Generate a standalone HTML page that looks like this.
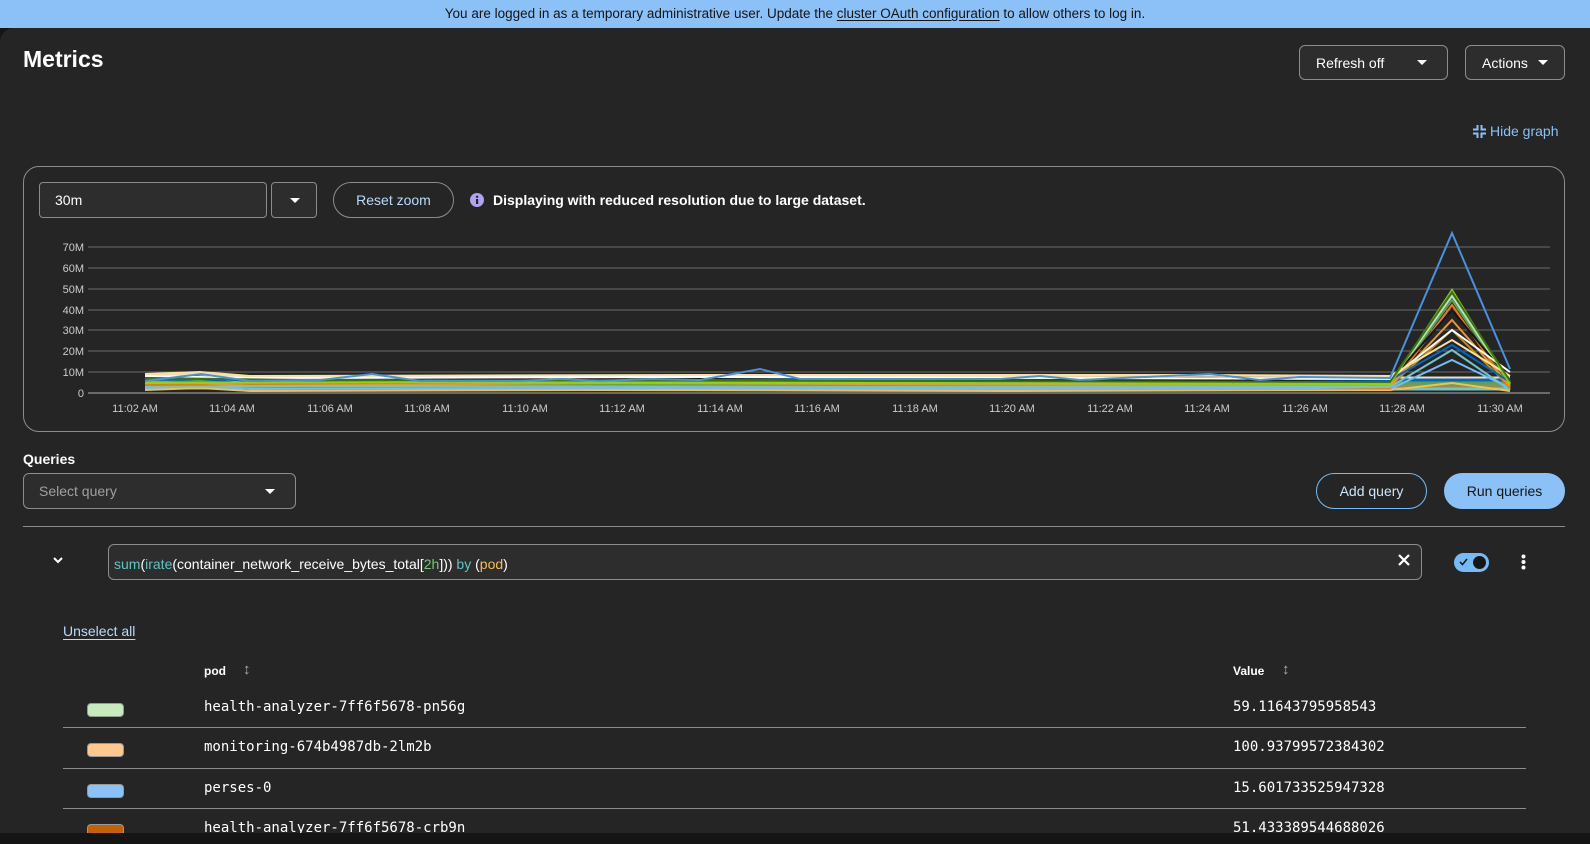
<!DOCTYPE html>
<html><head><meta charset="utf-8"><style>
*{box-sizing:border-box;margin:0;padding:0}
body{width:1590px;height:844px;background:#151515;font-family:"Liberation Sans",sans-serif;color:#fff;position:relative;overflow:hidden}
.banner{position:absolute;left:0;top:0;width:1590px;height:28px;background:#8bc1f7;color:#151515;font-size:13.5px;text-align:center;line-height:28px}
.banner u{text-underline-offset:2px}
.page{position:absolute;left:0;top:28px;width:1590px;height:805px;background:#252525;border-top-left-radius:14px}
.abs{position:absolute}
.btn{position:absolute;border:1px solid #8a8d90;border-radius:6px;background:#2d2d2d;font-size:14px;color:#fff;display:flex;align-items:center}
.caret{width:0;height:0;border-left:5px solid transparent;border-right:5px solid transparent;border-top:5px solid #fff;position:absolute}
.mono{font-family:"DejaVu Sans Mono","Liberation Mono",monospace;font-size:14px}
.row{position:absolute;left:63px;width:1463px;height:1px;background:#8a8d90}
.sw{position:absolute;left:87px;width:37px;height:14px;border-radius:4px;border:1px solid #999}
</style></head><body>
<div class="banner">You are logged in as a temporary administrative user. Update the <u>cluster OAuth configuration</u> to allow others to log in.</div>
<div class="page"></div>
<div class="abs" style="left:23px;top:46px;font-size:23px;font-weight:bold">Metrics</div>
<div class="btn" style="left:1299px;top:45px;width:149px;height:35px;padding-left:16px">Refresh off<span class="caret" style="right:20px;top:14px"></span></div>
<div class="btn" style="left:1465px;top:45px;width:100px;height:35px;padding-left:16px">Actions<span class="caret" style="right:16px;top:14px"></span></div>
<svg class="abs" style="left:1473px;top:125px" width="13" height="13" viewBox="0 0 13 13" fill="none" stroke="#8bc1f7" stroke-width="2"><path d="M4.5 0v4.5H0M8.5 0v4.5H13M4.5 13V8.5H0M8.5 13V8.5H13"/></svg>
<div class="abs" style="left:1490px;top:123px;font-size:14px;color:#8bc1f7">Hide graph</div>

<div class="abs" style="left:23px;top:166px;width:1542px;height:266px;border:1px solid #8a8d90;border-radius:16px"></div>
<div class="btn" style="left:39px;top:182px;width:228px;height:36px;padding-left:15px;border-radius:4px">30m</div>
<div class="btn" style="left:271px;top:182px;width:46px;height:36px;border-radius:4px"><span class="caret" style="left:18px;top:15px"></span></div>
<div class="btn" style="left:333px;top:182px;width:121px;height:36px;border-radius:18px;background:none;justify-content:center;color:#b9dafc">Reset zoom</div>
<svg class="abs" style="left:470px;top:193px" width="14" height="14"><circle cx="7" cy="7" r="7" fill="#b2a3f1"/><rect x="6" y="6" width="2.2" height="5" fill="#252525"/><circle cx="7.1" cy="3.8" r="1.2" fill="#252525"/></svg>
<div class="abs" style="left:493px;top:192px;font-size:14px;font-weight:bold">Displaying with reduced resolution due to large dataset.</div>

<svg class="abs" style="left:0;top:0" width="1590" height="440" font-family="Liberation Sans" font-size="11" fill="#ccc">
<g stroke="#6a6a6a" stroke-width="1">
<line x1="88" y1="247" x2="1550" y2="247"/><line x1="88" y1="268" x2="1550" y2="268"/><line x1="88" y1="289" x2="1550" y2="289"/><line x1="88" y1="310" x2="1550" y2="310"/><line x1="88" y1="330" x2="1550" y2="330"/><line x1="88" y1="351" x2="1550" y2="351"/><line x1="88" y1="372" x2="1550" y2="372"/><line x1="88" y1="393" x2="1550" y2="393" stroke-width="2"/>
</g>
<g text-anchor="end"><text x="84" y="251">70M</text><text x="84" y="272">60M</text><text x="84" y="293">50M</text><text x="84" y="314">40M</text><text x="84" y="334">30M</text><text x="84" y="355">20M</text><text x="84" y="376">10M</text><text x="84" y="397">0</text></g>
<g text-anchor="middle"><text x="135" y="412">11:02 AM</text><text x="232" y="412">11:04 AM</text><text x="330" y="412">11:06 AM</text><text x="427" y="412">11:08 AM</text><text x="525" y="412">11:10 AM</text><text x="622" y="412">11:12 AM</text><text x="720" y="412">11:14 AM</text><text x="817" y="412">11:16 AM</text><text x="915" y="412">11:18 AM</text><text x="1012" y="412">11:20 AM</text><text x="1110" y="412">11:22 AM</text><text x="1207" y="412">11:24 AM</text><text x="1305" y="412">11:26 AM</text><text x="1402" y="412">11:28 AM</text><text x="1500" y="412">11:30 AM</text></g>
<g fill="none" stroke-width="3">
<polyline stroke="#f9e0a2" points="145,375 200,374 250,378 700,377 1390,378 1510,378"/>
<polyline stroke="#5ba352" points="145,381 200,379 250,383 700,382 1200,381 1390,383 1510,383"/>
<polyline stroke="#8f8f5a" points="145,384 250,386 700,385 1390,386 1510,386"/>
<polyline stroke="#73c5c5" points="145,388 300,388 800,389 1390,389 1510,389"/>
<polyline stroke="#0066cc" points="145,379 250,380 700,379 1390,380 1510,380"/>
</g>
<g fill="none" stroke-width="2">
<polyline stroke="#f4c145" points="145,390 200,388 250,391 600,390 1000,391 1390,390 1452,383 1510,391"/>
<polyline stroke="#73bcf7" points="145,388 200,386 250,389 700,388 1100,389 1390,389 1452,360 1510,388"/>
<polyline stroke="#c58c00" points="145,386 200,385 250,387 800,386 1390,386 1452,330 1510,387"/>
<polyline stroke="#5ba352" points="145,384 200,381 250,385 700,384 1200,383 1390,385 1452,300 1510,385"/>
<polyline stroke="#ec7a08" points="145,385 250,384 700,383 1100,384 1390,388 1452,305 1510,389"/>
<polyline stroke="#ef9234" points="145,382 200,383 250,386 600,383 1390,386 1452,320 1510,386"/>
<polyline stroke="#bde2b9" points="145,379 200,377 250,382 700,381 1390,383 1452,296 1510,383"/>
<polyline stroke="#73c5c5" points="145,387 300,386 800,387 1390,387 1452,350 1510,390"/>
<polyline stroke="#151515" points="145,377 250,380 700,379 1390,381 1452,310 1510,380"/>
<polyline stroke="#0066cc" points="145,380 200,378 250,381 700,380 1200,378 1390,380 1452,345 1510,382"/>
<polyline stroke="#fff" points="145,376 250,378 700,377 1390,379 1452,330 1510,372"/>
<polyline stroke="#f9e0a2" points="145,374 200,372 250,376 700,375 1200,375 1390,376 1452,340 1510,376"/>
<polyline stroke="#92d400" points="145,383 400,382 900,383 1390,384 1452,290 1510,384"/>
<polyline stroke="#3d7317" points="145,378 300,380 900,381 1390,382 1452,292 1510,381"/>
<polyline stroke="#4a90e2" points="145,381 201,374 250,381 320,380 372,374 420,381 520,381 560,379 600,381 650,379 700,380 760,369 800,379 1000,379 1040,376 1080,380 1210,374 1260,380 1300,377 1390,378 1452,233 1510,369"/>
</g>
</svg>

<div class="abs" style="left:23px;top:451px;font-size:14px;font-weight:bold">Queries</div>
<div class="btn" style="left:23px;top:473px;width:273px;height:36px;padding-left:15px;color:#a0a0a0;border-radius:6px">Select query<span class="caret" style="right:20px;top:15px"></span></div>
<div class="btn" style="left:1316px;top:473px;width:111px;height:36px;border-radius:18px;background:none;border-color:#73bcf7;justify-content:center;color:#cde4fb">Add query</div>
<div class="btn" style="left:1444px;top:473px;width:121px;height:36px;border-radius:18px;background:#8bc1f7;border-color:#8bc1f7;justify-content:center;color:#151515">Run queries</div>
<div class="abs" style="left:23px;top:526px;width:1542px;height:1px;background:#8a8d90"></div>
<svg class="abs" style="left:53px;top:556px" width="10" height="8"><path d="M1 2l4 4 4-4" stroke="#fff" stroke-width="2" fill="none"/></svg>
<div class="btn" style="left:108px;top:544px;width:1314px;height:36px;padding-left:5px;padding-top:4px;border-radius:6px;font-size:14px"><span><span style="color:#5ec4c4">sum</span>(<span style="color:#5ec4c4">irate</span>(container_network_receive_bytes_total[<span style="color:#7cc674">2h</span>])) <span style="color:#5ec4c4">by</span> (<span style="color:#f4c145">pod</span>)</span></div>
<svg class="abs" style="left:1398px;top:554px" width="12" height="12"><path d="M1 1l10 10M11 1L1 11" stroke="#fff" stroke-width="2.2"/></svg>
<div class="abs" style="left:1454px;top:553px;width:35px;height:19px;border-radius:10px;background:#73bcf7"></div>
<div class="abs" style="left:1473px;top:556px;width:13px;height:13px;border-radius:50%;background:#151515"></div>
<svg class="abs" style="left:1459px;top:558px" width="9" height="8"><path d="M1 4l2.5 2.5L8 1" stroke="#151515" stroke-width="1.6" fill="none"/></svg>
<svg class="abs" style="left:1521px;top:554px" width="5" height="16"><circle cx="2.5" cy="2.5" r="2" fill="#fff"/><circle cx="2.5" cy="8" r="2" fill="#fff"/><circle cx="2.5" cy="13.5" r="2" fill="#fff"/></svg>

<div class="abs" style="left:63px;top:623px;font-size:14px;color:#b9dafc;text-decoration:underline;text-underline-offset:3px">Unselect all</div>
<div class="abs" style="left:204px;top:664px;font-size:12px;font-weight:bold">pod</div>
<div class="abs" style="left:243px;top:661px;font-size:15px;color:#aaa">↕</div>
<div class="abs" style="left:1233px;top:664px;font-size:12px;font-weight:bold">Value</div>
<div class="abs" style="left:1282px;top:661px;font-size:15px;color:#aaa">↕</div>

<div class="sw" style="top:703px;background:#c8ebbd"></div>
<div class="abs mono" style="left:204px;top:699px">health-analyzer-7ff6f5678-pn56g</div>
<div class="abs mono" style="left:1233px;top:699px">59.11643795958543</div>
<div class="row" style="top:727px"></div>
<div class="sw" style="top:743px;background:#fdc790"></div>
<div class="abs mono" style="left:204px;top:739px">monitoring-674b4987db-2lm2b</div>
<div class="abs mono" style="left:1233px;top:739px">100.93799572384302</div>
<div class="row" style="top:768px"></div>
<div class="sw" style="top:784px;background:#8bc1f7"></div>
<div class="abs mono" style="left:204px;top:780px">perses-0</div>
<div class="abs mono" style="left:1233px;top:780px">15.601733525947328</div>
<div class="row" style="top:808px"></div>
<div class="sw" style="top:824px;background:#c46100"></div>
<div class="abs mono" style="left:204px;top:820px">health-analyzer-7ff6f5678-crb9n</div>
<div class="abs mono" style="left:1233px;top:820px">51.433389544688026</div>
<div class="abs" style="left:0;top:833px;width:1590px;height:11px;background:#151515"></div>
</body></html>
